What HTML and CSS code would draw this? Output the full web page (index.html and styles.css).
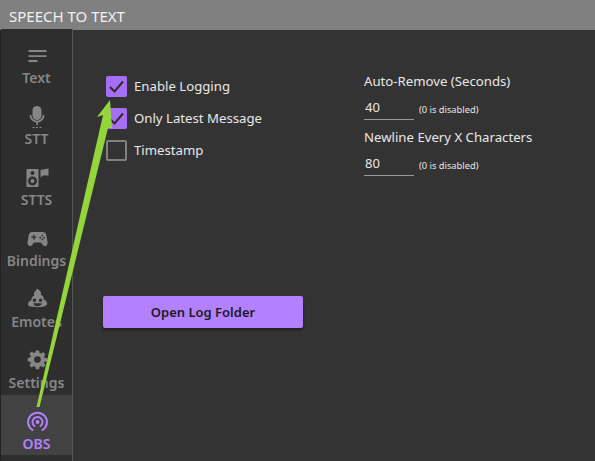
FILE: index.html
```html
<!DOCTYPE html>
<html lang="en">
<head>
    <meta charset="UTF-8">
    <meta name="viewport" content="width=device-width, initial-scale=1.0">
    <link rel="stylesheet" href="styles.css">
</head>
<body>
    <div class="window">
        <div class="titlebar">SPEECH TO TEXT</div>
        <div class="main">
            <nav class="sidebar">
                <div class="nav-item">
                    <svg class="nav-icon" viewBox="0 0 24 24"><path d="M3.500 7h18v2h-18zM3.500 12.300h18v1.800h-18zM3.500 17h9v2h-9z"/></svg>
                    <span>Text</span>
                </div>
                <div class="nav-item">
                    <svg class="nav-icon" viewBox="0 0 24 24"><rect x="7.500" y="2" width="9" height="14" rx="4.500"/><path d="M4.500 11h1.800a5.700 5.700 0 0 0 11.400 0h1.800a7.500 7.500 0 0 1-6.500 7.400V21h-1.600v-2.600A7.500 7.500 0 0 1 4.500 11zM7.500 23h2v1.500h-2zM11 23h2v1.500h-2zM14.500 23h2v1.500h-2z"/></svg>
                    <span>STT</span>
                </div>
                <div class="nav-item">
                    <svg class="nav-icon" viewBox="0 0 24 24"><path fill-rule="evenodd" d="M2.500 4h10a1 1 0 0 1 1 1v16a1 1 0 0 1-1 1h-10a1 1 0 0 1-1-1V5a1 1 0 0 1 1-1zM7.500 6a2 2 0 1 0 0 4 2 2 0 0 0 0-4zM7.500 11.500a4.500 4.500 0 1 0 0 9 4.500 4.500 0 0 0 0-9zM7.500 14a2 2 0 1 1 0 4 2 2 0 0 1 0-4z"/><path d="M15.500 5l8-1.500V10.500h-5.500l-2.500 2z"/></svg>
                    <span>STTS</span>
                </div>
                <div class="nav-item">
                    <svg class="nav-icon" viewBox="0 0 24 24"><path transform="translate(2.100 2.600) scale(.87)" fill-rule="evenodd" d="M6 4h12c2.500 0 3.700 1.500 4.200 4l1.300 8c.3 2.200-1 4-2.800 4-1.300 0-2.200-.7-3-1.800L16 16H8l-1.700 2.200C5.500 19.300 4.600 20 3.300 20 1.500 20 .2 18.200.5 16l1.300-8C2.300 5.500 3.500 4 6 4zM7 7v2H5v1.500h2v2h1.500v-2h2V9h-2V7zM17.500 7a1 1 0 1 0 0 2 1 1 0 0 0 0-2zM15 9.500a1 1 0 1 0 0 2 1 1 0 0 0 0-2zM19.500 9.500a1 1 0 1 0 0 2 1 1 0 0 0 0-2zM17.500 11.500a1 1 0 1 0 0 2 1 1 0 0 0 0-2z"/></svg>
                    <span>Bindings</span>
                </div>
                <div class="nav-item">
                    <svg class="nav-icon" viewBox="0 0 24 24"><path transform="translate(2.100 1) scale(.87)" fill-rule="evenodd" d="M11 1c2 .5 5 2.500 5 5 0 .7-.1 1.300-.4 1.800 2 .5 3.400 2 3.400 4 0 .4 0 .7-.1 1 2.300.7 4.100 2.700 4.100 5 0 2.900-4.500 4.200-11 4.200S1 21.700 1 18.800c0-2.300 1.800-4.300 4.100-5-.1-.3-.1-.6-.1-1 0-2 1.400-3.500 3.400-4C8 8 7.500 7 8 5.500 8.700 4 11 3.500 11 1zM8.500 12a2 2 0 1 0 0 4 2 2 0 0 0 0-4zM15.500 12a2 2 0 1 0 0 4 2 2 0 0 0 0-4zM7 17.500c.5 2.300 2.500 3.500 5 3.500s4.500-1.200 5-3.500z"/></svg>
                    <span>Emotes</span>
                </div>
                <div class="nav-item">
                    <svg class="nav-icon" viewBox="0 0 24 24"><path transform="translate(2.500 1.600) scale(.83)" fill-rule="evenodd" d="M10 1h4l.6 3.100 1.700.7 2.600-1.800 2.800 2.800-1.800 2.600.7 1.700L23.700 10v4l-3.100.6-.7 1.700 1.800 2.600-2.800 2.800-2.600-1.800-1.700.7L14 23.700h-4l-.6-3.100-1.700-.7-2.600 1.800-2.800-2.800 1.800-2.600-.7-1.700L.3 14v-4l3.100-.6.7-1.700-1.800-2.600 2.800-2.800 2.600 1.800 1.700-.7zM12 8a4 4 0 1 0 0 8 4 4 0 0 0 0-8z"/></svg>
                    <span>Settings</span>
                </div>
                <div class="nav-item active">
                    <svg class="nav-icon" viewBox="0 0 24 24"><g fill="none" stroke="currentColor" stroke-width="2" stroke-linecap="round"><path d="M7.500 21A9.400 9.400 0 1 1 17.500 21"/><path d="M9.500 17A5 5 0 1 1 15.500 17"/></g><circle cx="12.500" cy="13" r="2"/></svg>
                    <span>OBS</span>
                </div>
            </nav>
            <div class="content">
                <div class="top-row">
                    <div class="checks">
                        <div class="check-row">
                            <span class="box checked"><svg viewBox="0 0 21 21"><path d="M4 11l4.500 4.500 8.500-10"/></svg></span>
                            <span>Enable Logging</span>
                        </div>
                        <div class="check-row">
                            <span class="box checked"><svg viewBox="0 0 21 21"><path d="M4 11l4.500 4.500 8.500-10"/></svg></span>
                            <span>Only Latest Message</span>
                        </div>
                        <div class="check-row">
                            <span class="box"></span>
                            <span>Timestamp</span>
                        </div>
                    </div>
                    <div class="fields">
                        <div class="field-label">Auto-Remove (Seconds)</div>
                        <div class="field-row">
                            <span class="field-input">40</span>
                            <span class="hint">(0 is disabled)</span>
                        </div>
                        <div class="field-label">Newline Every X Characters</div>
                        <div class="field-row">
                            <span class="field-input">80</span>
                            <span class="hint">(0 is disabled)</span>
                        </div>
                    </div>
                </div>
                <button class="log-button">Open Log Folder</button>
            </div>
        </div>
    </div>

    <!-- annotation drawn over the screenshot -->
    <svg class="arrow" viewBox="0 0 595 461"><polygon points="110,100 97,117 103,115 36.500,407 39.500,407 108,128 112,128"/></svg>
</body>
</html>
```

FILE: styles.css
```css
html, body {
    margin: 0;
    padding: 0;
}
body {
    width: 595px;
    height: 461px;
    overflow: hidden;
    position: relative;
    background: #333333;
    font-family: 'Noto Sans', 'Open Sans', sans-serif;
    color: #e8e8e8;
}
.window {
    display: flex;
    flex-direction: column;
    height: 461px;
}
.titlebar {
    flex: 0 0 30px;
    box-sizing: border-box;
    padding: 6px 0 0 9px;
    background: #808080;
    color: #f2f2f2;
    font-size: 15px;
    line-height: 20px;
}
.main {
    flex: 1;
    min-height: 0;
    display: flex;
    border-left: 1px solid #222222;
}
.sidebar {
    flex: 0 0 72px;
    box-sizing: border-box;
    margin-top: -1px;
    background: #2e2e2e;
    border-right: 1px solid #555555;
}
.nav-item {
    height: 61px;
    box-sizing: border-box;
    padding-top: 14px;
    display: flex;
    flex-direction: column;
    align-items: center;
    color: #868686;
    font-size: 14px;
    font-weight: 600;
    line-height: 21px;
}
.nav-icon {
    width: 24px;
    height: 24px;
    fill: currentColor;
    flex-shrink: 0;
}
.nav-item.active {
    height: 60px;
    background: #424242;
    color: #b380ff;
}
.content {
    flex: 1;
    padding: 40px 0 0 30px;
}
.top-row {
    display: flex;
    height: 226px;
}
.checks {
    width: 261px;
}
.check-row {
    display: flex;
    align-items: center;
    gap: 7px;
    height: 32px;
    font-size: 13.200px;
    padding-left: 3px;
}
.box {
    width: 21px;
    height: 21px;
    box-sizing: border-box;
    border: 2px solid #808080;
    border-radius: 2px;
}
.box.checked {
    background: #a56ef5;
    border: none;
}
.box svg {
    display: block;
    fill: none;
    stroke: #2f2f2f;
    stroke-width: 2;
}
.fields {
    padding-top: 1px;
}
.field-label {
    font-size: 13.200px;
    line-height: 20px;
}
.field-row {
    display: flex;
    align-items: flex-end;
    gap: 5px;
    margin: 7px 0;
}
.field-input {
    width: 50px;
    height: 22px;
    box-sizing: border-box;
    border-bottom: 1px solid #999999;
    font-size: 13px;
    line-height: 18px;
    padding-left: 1px;
}
.hint {
    font-size: 9.300px;
    line-height: 20px;
}
.log-button {
    display: block;
    width: 200px;
    height: 32px;
    padding: 0;
    border: none;
    border-radius: 2px;
    background: #b380ff;
    color: #1c1c1c;
    font-family: inherit;
    font-size: 13px;
    font-weight: 600;
    box-shadow: 0 2px 3px rgba(0, 0, 0, 0.4);
}
.arrow {
    position: absolute;
    left: 0;
    top: 0;
    width: 595px;
    height: 461px;
}
.arrow polygon {
    fill: #95d53c;
}
```
